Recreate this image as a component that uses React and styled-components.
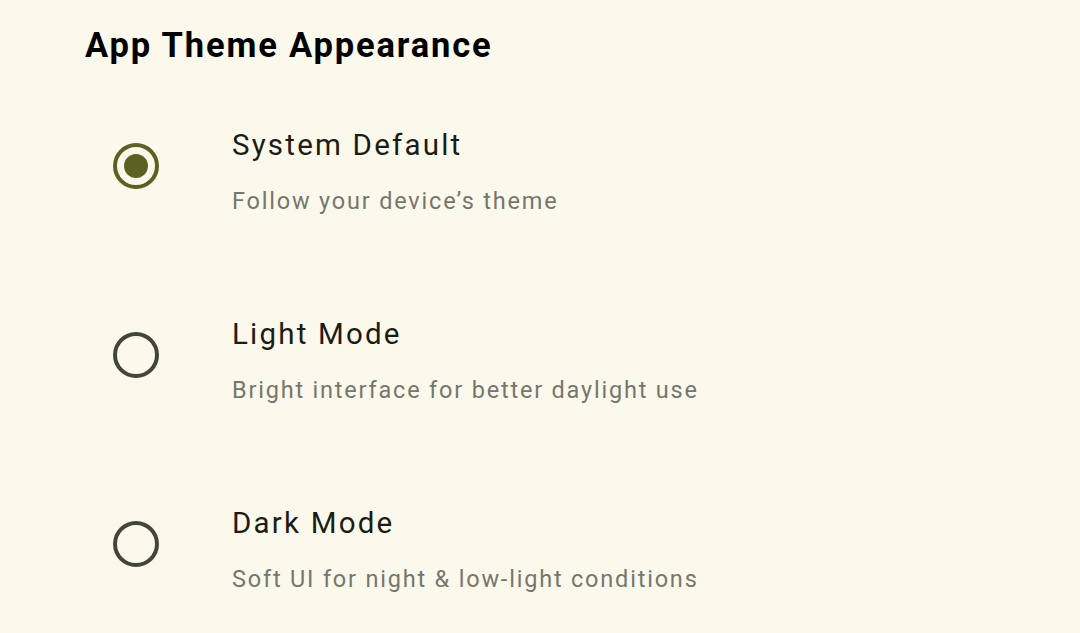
import React, { useState } from "react";
import styled, { createGlobalStyle } from "styled-components";

const Global = createGlobalStyle`
  html, body { margin: 0; padding: 0; background: #fbf9ec; }
  body { font-family: Roboto, "Noto Sans", sans-serif; }
`;

const Page = styled.div`
  width: 1080px;
  height: 633px;
  box-sizing: border-box;
  padding: 25px 0 0 85px;
  background: #fbf9ec;
  overflow: hidden;
`;

const Heading = styled.h1`
  margin: 0;
  font-size: 34.5px;
  line-height: 40px;
  font-weight: 700;
  color: #000;
  letter-spacing: 1.85px;
`;

const List = styled.div`
  display: flex;
  flex-direction: column;
  margin-top: 62px;
`;

const Row = styled.label`
  display: flex;
  align-items: flex-start;
  height: 189px;
  padding-left: 28px;
  gap: 73px;
  cursor: pointer;
`;

const Radio = styled.span`
  flex: none;
  margin-top: 16px;
  width: 46px;
  height: 46px;
  box-sizing: border-box;
  border-radius: 50%;
  border: 4px solid ${(p) => (p.$checked ? "#5c6121" : "#45443a")};
  display: flex;
  align-items: center;
  justify-content: center;
  &::after {
    content: "";
    display: ${(p) => (p.$checked ? "block" : "none")};
    width: 24px;
    height: 24px;
    border-radius: 50%;
    background: #5c6121;
  }
`;

const Texts = styled.div`
  display: flex;
  flex-direction: column;
`;

const Title = styled.div`
  font-size: 29.5px;
  line-height: 36px;
  color: #1c1c14;
  letter-spacing: 2.2px;
`;

const Sub = styled.div`
  margin-top: 23px;
  font-size: 23.5px;
  line-height: 30px;
  color: #77766c;
  letter-spacing: 1.8px;
`;

const options = [
  { id: "system", title: "System Default", sub: "Follow your device\u2019s theme" },
  { id: "light", title: "Light Mode", sub: "Bright interface for better daylight use" },
  { id: "dark", title: "Dark Mode", sub: "Soft UI for night & low-light conditions" },
];

export default function App() {
  const [value, setValue] = useState("system");
  return (
    <Page>
      <Global />
      <Heading>App Theme Appearance</Heading>
      <List>
        {options.map((o) => (
          <Row key={o.id} onClick={() => setValue(o.id)}>
            <Radio $checked={value === o.id} />
            <Texts>
              <Title>{o.title}</Title>
              <Sub>{o.sub}</Sub>
            </Texts>
          </Row>
        ))}
      </List>
    </Page>
  );
}
